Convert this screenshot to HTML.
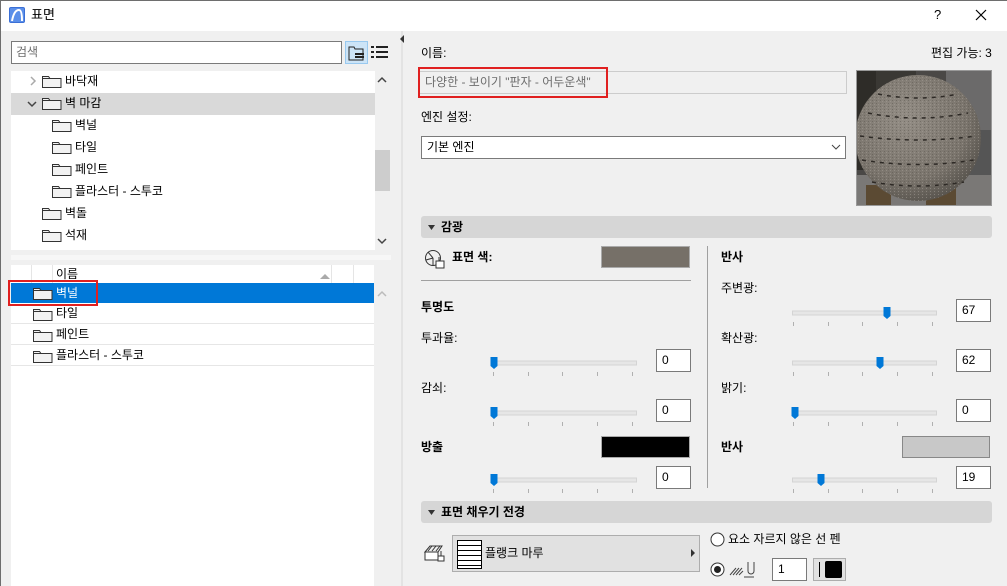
<!DOCTYPE html>
<html><head><meta charset="utf-8"><style>
*{margin:0;padding:0;box-sizing:border-box}
body{width:1007px;height:586px;overflow:hidden;background:#f0f0f0;font-family:"Liberation Sans","Noto Sans CJK KR",sans-serif;font-size:12px;color:#000;position:relative}
.a{position:absolute}
.t{position:absolute;white-space:nowrap;line-height:14px}
.b{font-weight:bold}
.inp{position:absolute;background:#fff;border:1px solid #7a7a7a;height:23px;padding:3px 0 0 5px;font-size:12px}
.row{position:absolute;left:11px;width:363px;height:22px;border-bottom:1px solid #e6e6e6}
</style></head><body>
<div class="a" style="left:0;top:0;width:1007px;height:31px;background:#fff;border-top:1px solid #6e6e6e"></div>
<div class="a" style="left:0;top:0;width:1px;height:586px;background:#6e6e6e"></div>
<svg class="a" style="left:9px;top:7px" width="16" height="16"><rect width="16" height="16" rx="2" fill="#3b6fd6"/><rect x="1" y="1" width="14" height="14" rx="1" fill="#5b8fe9"/><path d="M3 14 Q5 3 10 3 Q13 3 13 14" stroke="#fff" stroke-width="2" fill="none"/></svg>
<div class="t" style="left:31px;top:8px;font-size:13px">표면</div>
<div class="t" style="left:934px;top:8px;font-size:13px">?</div>
<svg class="a" style="left:975px;top:9px" width="12" height="12"><path d="M1 1L11 11M11 1L1 11" stroke="#000" stroke-width="1.2"/></svg>

<div class="a" style="left:11px;top:41px;width:331px;height:23px;background:#fff;border:1px solid #7a7a7a"></div>
<div class="t" style="left:16px;top:45px;color:#6d6d6d">검색</div>
<div class="a" style="left:345px;top:41px;width:23px;height:23px;background:#cce4f7;border:1px solid #99c9ef"></div>
<svg class="a" style="left:348px;top:44px" width="18" height="18"><path d="M1 3h5l1 2h8v11H1z" fill="none" stroke="#222"/><rect x="7" y="9" width="9" height="2" fill="#222"/><rect x="7" y="12" width="9" height="2" fill="#222"/></svg>
<svg class="a" style="left:371px;top:45px" width="17" height="14"><g fill="#222"><rect x="0" y="1" width="3" height="2"/><rect x="5" y="1" width="12" height="2"/><rect x="0" y="6" width="3" height="2"/><rect x="5" y="6" width="12" height="2"/><rect x="0" y="11" width="3" height="2"/><rect x="5" y="11" width="12" height="2"/></g></svg>

<div class="a" style="left:11px;top:71px;width:364px;height:179px;background:#fff"></div>
<div class="a" style="left:11px;top:93px;width:364px;height:22px;background:#d9d9d9"></div>
<svg class="a" style="left:0;top:71px" width="375" height="179">
<defs><g id="f"><path d="M0.5 2.5h6l1.5 2h11v9H0.5z" fill="#f2f2f2" stroke="#333"/><path d="M0.5 4.5h7.5" stroke="#333"/></g></defs>
<path d="M31 6l4 4-4 4" stroke="#aaa" stroke-width="1.5" fill="none"/>
<use href="#f" x="42" y="3"/>
<path d="M28 31l4 4 4-4" stroke="#444" stroke-width="1.5" fill="none"/>
<use href="#f" x="42" y="25"/>
<use href="#f" x="52" y="47"/><use href="#f" x="52" y="69"/><use href="#f" x="52" y="91"/><use href="#f" x="52" y="113"/>
<use href="#f" x="42" y="135"/><use href="#f" x="42" y="157"/>
</svg>
<div class="t" style="left:65px;top:74px">바닥재</div>
<div class="t" style="left:65px;top:96px">벽 마감</div>
<div class="t" style="left:75px;top:118px">벽널</div>
<div class="t" style="left:75px;top:140px">타일</div>
<div class="t" style="left:75px;top:162px">페인트</div>
<div class="t" style="left:75px;top:184px">플라스터 - 스투코</div>
<div class="t" style="left:65px;top:206px">벽돌</div>
<div class="t" style="left:65px;top:228px">석재</div>
<svg class="a" style="left:377px;top:76px" width="10" height="8"><path d="M1 6l4-4 4 4" stroke="#444" stroke-width="1.5" fill="none"/></svg>
<div class="a" style="left:375px;top:150px;width:15px;height:41px;background:#cdcdcd"></div>
<svg class="a" style="left:377px;top:237px" width="10" height="8"><path d="M1 2l4 4 4-4" stroke="#444" stroke-width="1.5" fill="none"/></svg>
<div class="a" style="left:11px;top:255px;width:380px;height:5px;background:#f7f7f7"></div>

<div class="a" style="left:11px;top:265px;width:363px;height:321px;background:#fff"></div>
<div class="a" style="left:31px;top:265px;width:1px;height:18px;background:#e5e5e5"></div>
<div class="a" style="left:52px;top:265px;width:1px;height:18px;background:#e5e5e5"></div>
<div class="a" style="left:331px;top:265px;width:1px;height:18px;background:#e5e5e5"></div>
<div class="a" style="left:353px;top:265px;width:1px;height:18px;background:#e5e5e5"></div>
<div class="t" style="left:56px;top:267px">이름</div>
<svg class="a" style="left:319px;top:273px" width="12" height="6"><path d="M1 6l5-5 5 5z" fill="#aaa"/></svg>
<div class="a" style="left:11px;top:283px;width:363px;height:20px;background:#0078d7"></div>
<div class="row" style="top:303px;height:21px"></div>
<div class="row" style="top:324px;height:21px"></div>
<div class="row" style="top:345px;height:21px"></div>
<svg class="a" style="left:0;top:283px" width="60" height="90"><use href="#f" x="33" y="3"/><use href="#f" x="33" y="24"/><use href="#f" x="33" y="45"/><use href="#f" x="33" y="66"/></svg>
<div class="t" style="left:56px;top:286px;color:#fff">벽널</div>
<div class="t" style="left:56px;top:306px">타일</div>
<div class="t" style="left:56px;top:327px">페인트</div>
<div class="t" style="left:56px;top:348px">플라스터 - 스투코</div>
<svg class="a" style="left:377px;top:290px" width="10" height="8"><path d="M1 6l4-4 4 4" stroke="#bbb" stroke-width="1.5" fill="none"/></svg>
<div class="a" style="left:8px;top:280px;width:90px;height:26px;border:2px solid #e02020"></div>

<div class="a" style="left:401px;top:31px;width:2px;height:555px;background:#e3e3e3"></div>
<svg class="a" style="left:400px;top:35px" width="5" height="8"><path d="M4 0v8L0 4z" fill="#333"/></svg>

<div class="t" style="left:421px;top:46px">이름:</div>
<div class="t" style="left:931px;top:46px">편집 가능: 3</div>
<div class="a" style="left:418px;top:71px;width:429px;height:23px;background:#f0f0f0;border:1px solid #ccc"></div>
<div class="t" style="left:425px;top:75px;color:#6d6d6d">다양한 - 보이기 "판자 - 어두운색"</div>
<div class="a" style="left:418px;top:67px;width:190px;height:31px;border:2px solid #e02020"></div>
<div class="t" style="left:421px;top:110px">엔진 설정:</div>
<div class="a" style="left:421px;top:136px;width:425px;height:23px;background:#fff;border:1px solid #7a7a7a"></div>
<div class="t" style="left:427px;top:140px">기본 엔진</div>
<svg class="a" style="left:831px;top:144px" width="10" height="6"><path d="M1 1l4 4 4-4" stroke="#444" fill="none"/></svg>
<svg class="a" style="left:856px;top:70px" width="136" height="136">
<defs><radialGradient id="s" cx="0.4" cy="0.35" r="0.7"><stop offset="0" stop-color="#938d85"/><stop offset="0.7" stop-color="#7a746c"/><stop offset="1" stop-color="#55514b"/></radialGradient>
<pattern id="n" width="4" height="3" patternUnits="userSpaceOnUse"><rect width="4" height="3" fill="none"/><rect x="0" y="0" width="1" height="1" fill="#5a554e" opacity=".5"/><rect x="2" y="1" width="1" height="1" fill="#a8a29a" opacity=".5"/></pattern></defs>
<rect width="136" height="136" fill="#4a4846"/>
<rect x="0" y="0" width="20" height="100" fill="#2e2c28"/><rect x="20" y="0" width="40" height="40" fill="#3a3834"/>
<rect x="90" y="0" width="46" height="60" fill="#6b6a6a"/><rect x="100" y="60" width="36" height="50" fill="#555"/>
<rect x="0" y="105" width="136" height="31" fill="#7a7876"/><rect x="10" y="115" width="25" height="21" fill="#5b4a33"/><rect x="70" y="115" width="30" height="21" fill="#5b4a33"/>
<circle cx="62" cy="68" r="63" fill="url(#s)"/>
<circle cx="62" cy="68" r="63" fill="url(#n)"/>
<g stroke="#2e2a26" stroke-width="1.5" stroke-dasharray="4 5" fill="none"><path d="M12 43Q62 53 112 43"/><path d="M4 66Q62 74 120 66"/><path d="M6 90Q62 99 118 90"/><path d="M16 112Q62 120 108 112"/><path d="M22 24Q62 32 102 24"/></g>
<rect x="0.5" y="0.5" width="135" height="135" fill="none" stroke="#999"/>
</svg>

<div class="a" style="left:421px;top:216px;width:571px;height:22px;background:#d6d6d6;border-radius:3px"></div>
<svg class="a" style="left:428px;top:225px" width="7" height="5"><path d="M0 0h7L3.5 5z" fill="#333"/></svg>
<div class="t b" style="left:441px;top:220px">감광</div>

<svg class="a" style="left:424px;top:249px" width="22" height="20"><circle cx="9" cy="9" r="7.5" fill="none" stroke="#333"/><path d="M9 9L4 3M9 9L2 11M9 9L9 17" stroke="#333" fill="none"/><rect x="12" y="12" width="8" height="7" fill="#fff" stroke="#333"/><path d="M15 12V8" stroke="#333"/></svg>
<div class="t b" style="left:452px;top:250px">표면 색:</div>
<div class="a" style="left:601px;top:246px;width:89px;height:22px;background:#767068;border:1px solid #aaa"></div>
<div class="a" style="left:421px;top:280px;width:270px;height:1px;background:#a0a0a0"></div>
<div class="t b" style="left:421px;top:300px">투명도</div>
<div class="t" style="left:421px;top:331px">투과율:</div>
<div class="t" style="left:421px;top:381px">감쇠:</div>
<div class="t b" style="left:421px;top:440px">방출</div>
<div class="a" style="left:601px;top:436px;width:89px;height:22px;background:#000;border:1px solid #aaa"></div>
<div class="a" style="left:707px;top:246px;width:1px;height:242px;background:#a0a0a0"></div>

<div class="t b" style="left:721px;top:250px">반사</div>
<div class="t" style="left:721px;top:281px">주변광:</div>
<div class="t" style="left:721px;top:331px">확산광:</div>
<div class="t" style="left:721px;top:381px">밝기:</div>
<div class="t b" style="left:721px;top:440px">반사</div>
<div class="a" style="left:902px;top:436px;width:88px;height:22px;background:#c8c8c8;border:1px solid #888"></div>

<svg class="a" style="left:0;top:0" width="1007" height="586">
<defs>
<g id="sl"><rect x="0.5" y="-2" width="144" height="4" fill="#e6e6e6" stroke="#d4d4d4"/><g fill="#b0b0b0"><rect x="1" y="9" width="1" height="4"/><rect x="36" y="9" width="1" height="4"/><rect x="70" y="9" width="1" height="4"/><rect x="105" y="9" width="1" height="4"/><rect x="140" y="9" width="1" height="4"/></g></g>
<path id="th" d="M-3.5 -6h7v9l-3.5 3l-3.5 -3z" fill="#0078d7"/>
</defs>
<use href="#sl" x="492" y="363"/><use href="#th" x="494" y="363"/>
<use href="#sl" x="492" y="413"/><use href="#th" x="494" y="413"/>
<use href="#sl" x="492" y="480"/><use href="#th" x="494" y="480"/>
<use href="#sl" x="792" y="313"/><use href="#th" x="887" y="313"/>
<use href="#sl" x="792" y="363"/><use href="#th" x="880" y="363"/>
<use href="#sl" x="792" y="413"/><use href="#th" x="795" y="413"/>
<use href="#sl" x="792" y="480"/><use href="#th" x="821" y="480"/>
</svg>
<div class="inp" style="left:656px;top:349px;width:35px">0</div>
<div class="inp" style="left:656px;top:399px;width:35px">0</div>
<div class="inp" style="left:656px;top:466px;width:35px">0</div>
<div class="inp" style="left:956px;top:299px;width:35px">67</div>
<div class="inp" style="left:956px;top:349px;width:35px">62</div>
<div class="inp" style="left:956px;top:399px;width:35px">0</div>
<div class="inp" style="left:956px;top:466px;width:35px">19</div>

<div class="a" style="left:421px;top:501px;width:571px;height:22px;background:#d6d6d6;border-radius:3px"></div>
<svg class="a" style="left:428px;top:510px" width="7" height="5"><path d="M0 0h7L3.5 5z" fill="#333"/></svg>
<div class="t b" style="left:441px;top:505px">표면 채우기 전경</div>
<svg class="a" style="left:424px;top:544px" width="22" height="18"><path d="M1 8l5-6h12l-4 6z" fill="#eee" stroke="#333"/><path d="M4 7l4-5M8 7l4-5M12 7l4-5" stroke="#333"/><rect x="1" y="8" width="13" height="8" fill="#fff" stroke="#333"/><rect x="14" y="12" width="6" height="5" fill="#fff" stroke="#333"/><path d="M17 12V7" stroke="#333"/></svg>
<div class="a" style="left:452px;top:535px;width:248px;height:37px;background:#e1e1e1;border:1px solid #adadad"></div>
<svg class="a" style="left:457px;top:540px" width="25" height="29"><rect x="0.5" y="0.5" width="24" height="28" fill="#fff" stroke="#000"/><g stroke="#000"><path d="M0 5.5h25M0 10.5h25M0 15.5h25M0 20.5h25M0 25.5h25"/></g></svg>
<div class="t" style="left:485px;top:546px">플랭크 마루</div>
<svg class="a" style="left:691px;top:549px" width="5" height="8"><path d="M0 0l4 4-4 4z" fill="#333"/></svg>
<svg class="a" style="left:710px;top:532px" width="15" height="15"><circle cx="7.5" cy="7.5" r="6.5" fill="#fff" stroke="#333"/></svg>
<div class="t" style="left:728px;top:532px">요소 자르지 않은 선 펜</div>
<svg class="a" style="left:710px;top:562px" width="15" height="15"><circle cx="7.5" cy="7.5" r="6.5" fill="#fff" stroke="#333"/><circle cx="7.5" cy="7.5" r="3.5" fill="#222"/></svg>
<svg class="a" style="left:729px;top:561px" width="30" height="18"><g stroke="#444"><path d="M1 14l6-7M4 14l6-7M7 14l6-7M10 14l4-4"/><path d="M19 1v9a3 3 0 0 0 6 0V1" fill="none"/><path d="M15 16h10"/></g></svg>
<div class="inp" style="left:772px;top:558px;width:35px">1</div>
<div class="a" style="left:813px;top:558px;width:33px;height:23px;background:#e1e1e1;border:1px solid #adadad"></div>
<div class="a" style="left:819px;top:562px;width:1px;height:15px;background:#000"></div>
<div class="a" style="left:825px;top:561px;width:17px;height:17px;background:#000;border-radius:2px"></div>
</body></html>
